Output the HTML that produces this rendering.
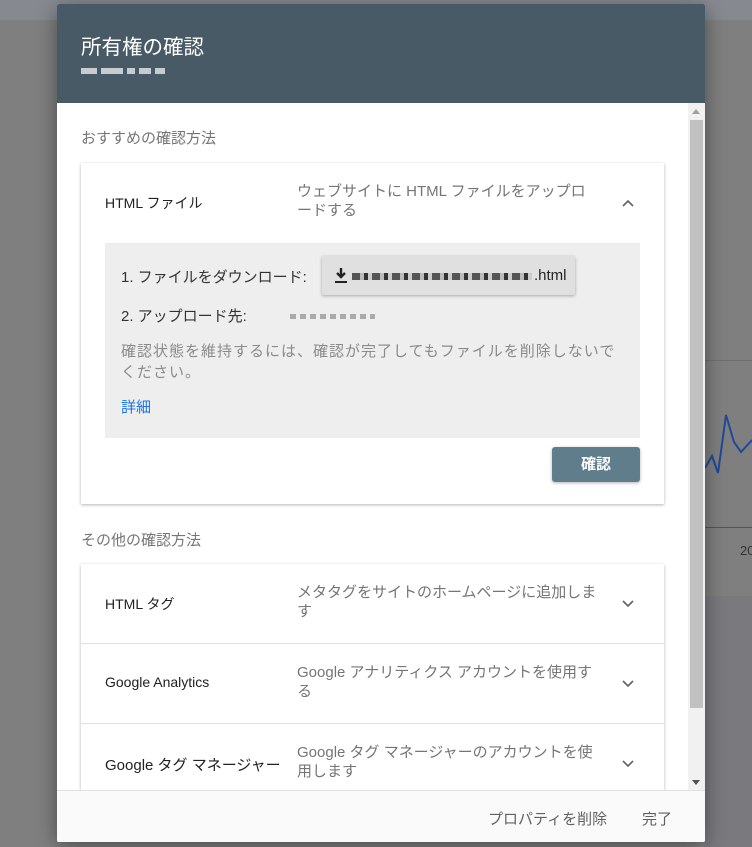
<!DOCTYPE html>
<html><head><meta charset="utf-8"><style>
body{margin:0;width:752px;height:847px;background:#7f7f7f;position:relative;overflow:hidden;font-family:"Liberation Sans","Noto Sans CJK JP",sans-serif;}
.bgtop{position:absolute;left:0;top:0;width:752px;height:20px;background:#868990;}
.bgline{position:absolute;height:1px;background:#6f6f6f;}
.dlg{position:absolute;left:57px;top:4px;width:648px;height:838px;background:#fff;box-shadow:0 4px 20px rgba(0,0,0,.4);border-radius:2px;overflow:hidden;}
.hd{height:99px;background:#485a66;color:#fff;}
.hd h1{margin:0;position:absolute;left:24px;top:26px;font-size:20.5px;font-weight:normal;}
.pix{position:absolute;top:64px;height:6px;background:#c8ccd0;}
.sb{position:absolute;left:631px;top:99px;width:17px;height:687px;background:#f1f1f1;}
.th{position:absolute;left:2px;top:17px;width:13px;height:588px;background:#c1c1c1;}
.sec{position:absolute;left:24px;font-size:15px;color:#757575;}
.card{position:absolute;left:24px;width:583px;background:#fff;box-shadow:0 1px 3px rgba(0,0,0,.3);}
.row{position:relative;height:79px;border-bottom:1px solid #e0e0e0;font-size:14px;}
.t{position:absolute;left:24px;top:30px;color:#212121;}
.d{position:absolute;left:216px;top:19px;width:305px;color:#757575;line-height:19px;font-size:15px;}
.chev{position:absolute;left:541px;top:36px;}
.ft{position:absolute;left:0;top:786px;width:648px;height:52px;background:#fafafa;border-top:1px solid #e0e0e0;font-size:15px;color:#616161;}
</style></head><body>
<div class="bgtop"></div>
<div class="bgline" style="left:705px;top:360px;width:47px"></div>
<div class="bgline" style="left:705px;top:527px;width:47px;background:#555"></div>
<div style="position:absolute;left:705px;top:596px;width:47px;height:251px;background:#7a7a7e"></div>
<svg style="position:absolute;left:705px;top:410px" width="47" height="70"><polyline points="0,58 7,46 13,63 21,5 29,32 36,42 47,30" fill="none" stroke="#1f4a9a" stroke-width="2"/></svg>
<div style="position:absolute;left:740px;top:543px;font-size:13px;color:#333">20</div>
<div class="dlg">
<div class="hd"><h1>所有権の確認</h1>
<div class="pix" style="left:24px;width:16px"></div><div class="pix" style="left:44px;width:22px"></div><div class="pix" style="left:70px;width:8px"></div><div class="pix" style="left:82px;width:12px"></div><div class="pix" style="left:98px;width:10px"></div></div>
<div class="sec" style="top:123px">おすすめの確認方法</div>
<div class="card" style="top:159px;height:341px">
<div class="t" style="top:30px;font-size:14px">HTML ファイル</div>
<div class="d" style="top:19px;width:300px">ウェブサイトに HTML ファイルをアップロードする</div>
<svg class="chev" style="top:36px" width="12" height="8"><polyline points="1,7 6,2 11,7" fill="none" stroke="#616161" stroke-width="1.6"/></svg>
<div style="position:absolute;left:24px;top:80px;width:535px;height:195px;background:#eeeeee;font-size:15px;">
<div style="position:absolute;left:16px;top:23px;color:#333">1. ファイルをダウンロード:</div>
<div style="position:absolute;left:217px;top:13px;width:253px;height:39px;background:#e0e0e0;box-shadow:0 1px 3px rgba(0,0,0,.3);border-radius:2px;">
<svg style="position:absolute;left:12px;top:12px" width="14" height="16"><path d="M7 0v9M3 5l4 4 4-4" stroke="#222" stroke-width="2.4" fill="none"/><rect x="1" y="13" width="12" height="2" fill="#222"/></svg>
<div style="position:absolute;left:30px;top:17px;width:180px;height:7px;background:repeating-linear-gradient(90deg,#555 0 8px,#bbb 8px 12px,#333 12px 16px,#ccc 16px 20px)"></div>
<span style="position:absolute;left:212px;top:11px;color:#222">.html</span></div>
<div style="position:absolute;left:16px;top:62px;color:#333">2. アップロード先:</div>
<div style="position:absolute;left:185px;top:71px;width:85px;height:5px;background:repeating-linear-gradient(90deg,#aaa 0 6px,transparent 6px 10px)"></div>
<div style="position:absolute;left:16px;top:98px;white-space:nowrap;color:#8a8a8a;line-height:21px;letter-spacing:1px">確認状態を維持するには、確認が完了してもファイルを削除しないで<br>ください。</div>
<div style="position:absolute;left:16px;top:153px;color:#1a73e8">詳細</div>
</div>
<div style="position:absolute;left:471px;top:284px;width:88px;height:35px;background:#607d8b;color:#fff;border-radius:3px;box-shadow:0 1px 3px rgba(0,0,0,.3);text-align:center;line-height:35px;font-size:15px;font-weight:bold">確認</div>
</div>
<div class="sec" style="top:525px">その他の確認方法</div>
<div class="card" style="top:560px;height:240px">
<div class="row"><div class="t">HTML タグ</div><div class="d">メタタグをサイトのホームページに追加します</div><svg class="chev" width="12" height="8"><polyline points="1,1 6,6 11,1" fill="none" stroke="#616161" stroke-width="1.6"/></svg></div>
<div class="row"><div class="t">Google Analytics</div><div class="d">Google アナリティクス アカウントを使用する</div><svg class="chev" width="12" height="8"><polyline points="1,1 6,6 11,1" fill="none" stroke="#616161" stroke-width="1.6"/></svg></div>
<div class="row"><div class="t" style="font-size:15px">Google タグ マネージャー</div><div class="d">Google タグ マネージャーのアカウントを使用します</div><svg class="chev" width="12" height="8"><polyline points="1,1 6,6 11,1" fill="none" stroke="#616161" stroke-width="1.6"/></svg></div>
</div>
<div class="sb"><div class="th"></div>
<div style="position:absolute;left:4px;top:6px;border:4px solid transparent;border-bottom:5px solid #a0a0a0;border-top:0"></div>
<div style="position:absolute;left:4px;top:677px;border:4px solid transparent;border-top:5px solid #505050;border-bottom:0"></div></div>
<div class="ft"><span style="position:absolute;left:431px;top:17px">プロパティを削除</span><span style="position:absolute;left:585px;top:17px">完了</span></div>
</div>
</body></html>
